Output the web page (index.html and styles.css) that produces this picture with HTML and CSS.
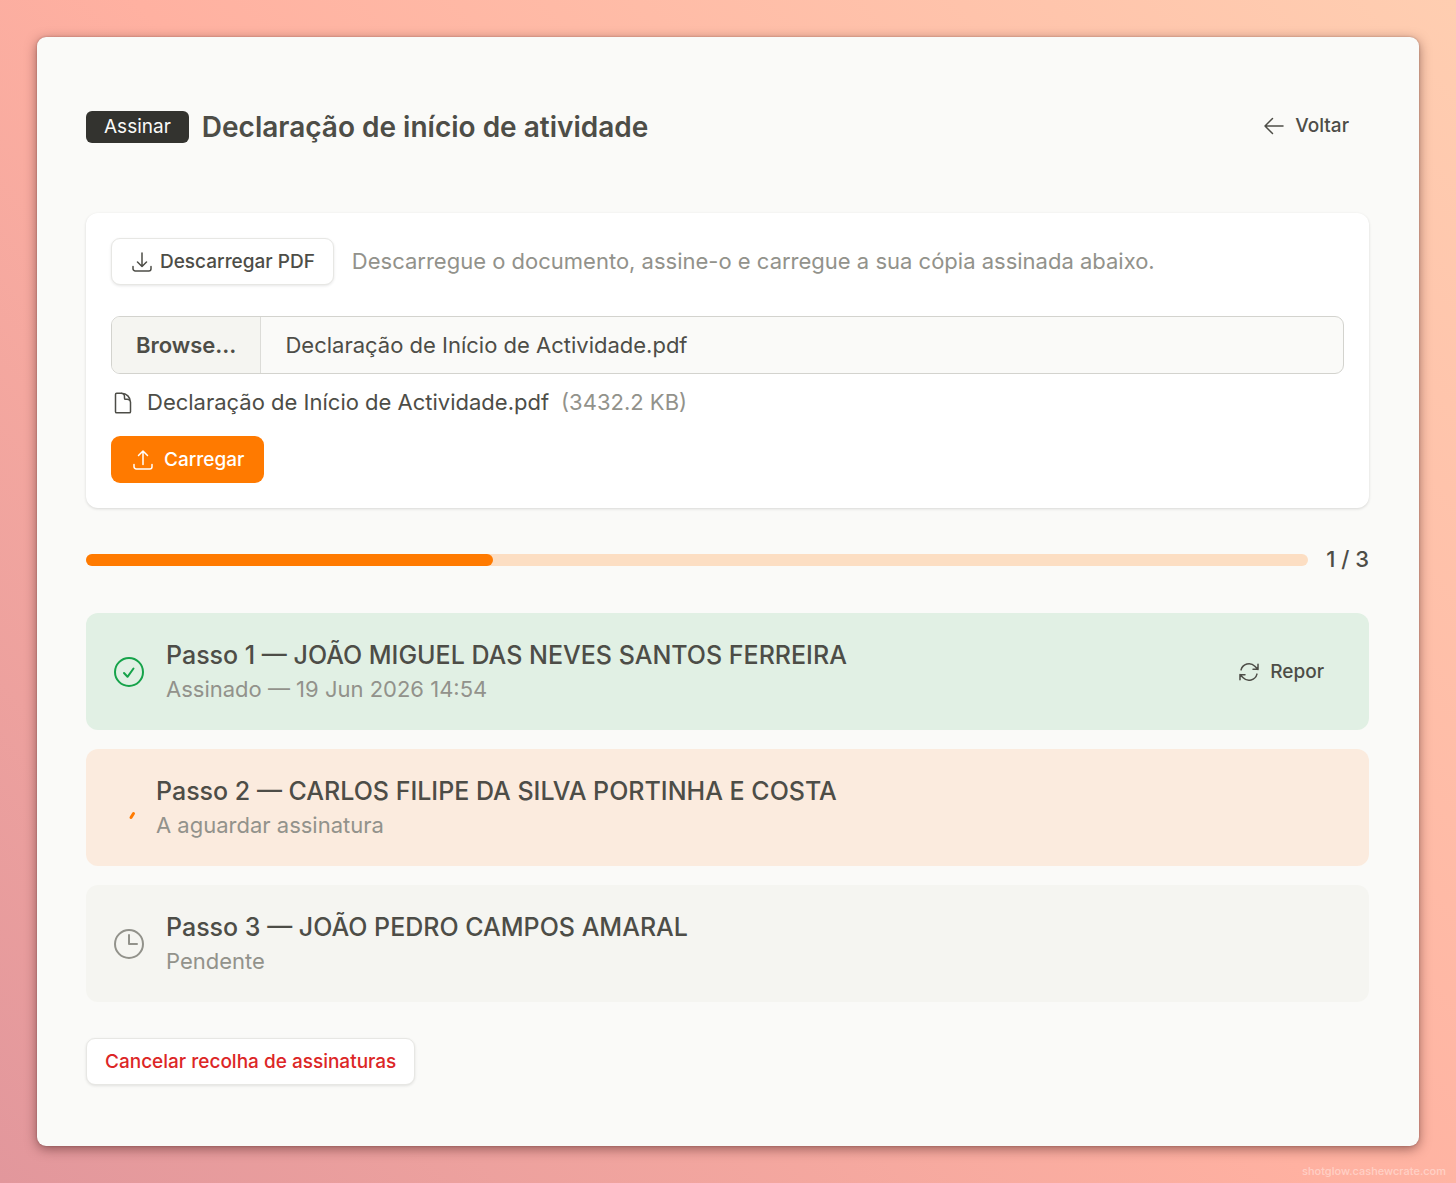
FILE: index.html
```
<!DOCTYPE html>
<html lang="pt">
<head>
    <meta charset="UTF-8">
    <meta name="viewport" content="width=device-width, initial-scale=1.0">
    <title>Declaração de início de atividade</title>
    <link rel="stylesheet" href="styles.css">
</head>
<body>
    <main class="sheet">
        <header class="page-header">
            <div class="page-title">
                <span class="badge">Assinar</span>
                <h1>Declaração de início de atividade</h1>
            </div>
            <a href="#" class="btn btn-ghost btn-back">
                <svg class="icon" viewBox="0 0 24 24"><path d="M10.5 19.5 3 12m0 0 7.5-7.5M3 12h18"/></svg>
                Voltar
            </a>
        </header>

        <section class="card">
            <div class="download-row">
                <button type="button" class="btn btn-outline btn-download">
                    <svg class="icon" viewBox="0 0 24 24"><path d="M3 16.5v2.25A2.25 2.25 0 0 0 5.25 21h13.5A2.25 2.25 0 0 0 21 18.75V16.5M16.5 12 12 16.5m0 0L7.5 12m4.5 4.5V3"/></svg>
                    Descarregar PDF
                </button>
                <p class="muted">Descarregue o documento, assine-o e carregue a sua cópia assinada abaixo.</p>
            </div>

            <label class="file-input">
                <input type="file" accept="application/pdf">
                <span class="file-browse">Browse…</span>
                <span class="file-name">Declaração de Início de Actividade.pdf</span>
            </label>

            <div class="file-info">
                <svg class="icon" viewBox="0 0 24 24"><path d="M19.5 14.25v-2.625a3.375 3.375 0 0 0-3.375-3.375h-1.5A1.125 1.125 0 0 1 13.5 7.125v-1.5a3.375 3.375 0 0 0-3.375-3.375H5.625c-.621 0-1.125.504-1.125 1.125v17.25c0 .621.504 1.125 1.125 1.125h12.75c.621 0 1.125-.504 1.125-1.125V11.25a9 9 0 0 0-9-9"/></svg>
                <span>Declaração de Início de Actividade.pdf</span>
                <span class="muted">(3432.2 KB)</span>
            </div>

            <button type="button" class="btn btn-primary">
                <svg class="icon" viewBox="0 0 24 24"><path d="M3 16.5v2.25A2.25 2.25 0 0 0 5.25 21h13.5A2.25 2.25 0 0 0 21 18.75V16.5M7.5 7.5 12 3m0 0 4.5 4.5M12 3v13.5"/></svg>
                Carregar
            </button>
        </section>

        <div class="progress">
            <div class="progress-track">
                <div class="progress-bar" style="width: 33.33%"></div>
            </div>
            <span class="progress-label">1 / 3</span>
        </div>

        <ol class="steps">
            <li class="step step-done">
                <svg class="step-icon" viewBox="0 0 36 36"><circle cx="18" cy="18" r="14"/><path d="m13 19 3.500 3.800 6-8.300"/></svg>
                <div class="step-text">
                    <h2>Passo 1 — JOÃO MIGUEL DAS NEVES SANTOS FERREIRA</h2>
                    <p class="muted">Assinado — 19 Jun 2026 14:54</p>
                </div>
                <button type="button" class="btn btn-ghost">
                    <svg class="icon" viewBox="0 0 24 24"><path d="M16.023 9.348h4.992V4.356M2.985 19.644v-4.992h4.992M2.985 14.652l3.181 3.183a8.250 8.250 0 0 0 13.803-3.700M4.031 9.865a8.250 8.250 0 0 1 13.803-3.700l3.181 3.183"/></svg>
                    Repor
                </button>
            </li>
            <li class="step step-active">
                <svg class="step-spinner" viewBox="0 0 26 26"><path d="m20 22.500 2.500-4"/></svg>
                <div class="step-text">
                    <h2>Passo 2 — CARLOS FILIPE DA SILVA PORTINHA E COSTA</h2>
                    <p class="muted">A aguardar assinatura</p>
                </div>
            </li>
            <li class="step step-pending">
                <svg class="step-icon" viewBox="0 0 36 36"><circle cx="18" cy="18" r="14"/><path d="M18 9v9h8"/></svg>
                <div class="step-text">
                    <h2>Passo 3 — JOÃO PEDRO CAMPOS AMARAL</h2>
                    <p class="muted">Pendente</p>
                </div>
            </li>
        </ol>

        <button type="button" class="btn btn-outline btn-danger">Cancelar recolha de assinaturas</button>
    </main>
    <footer class="watermark">shotglow.cashewcrate.com</footer>
</body>
</html>
```
FILE: styles.css
```
* {
    box-sizing: border-box;
}
body {
    position: relative;
    margin: 0;
    padding: 37px;
    min-height: 100vh;
    font-family: Inter, "Liberation Sans", sans-serif;
    font-size: 22px;
    line-height: 33px;
    color: #4d4d47;
    background: linear-gradient(45deg, #e2979c 0%, #ffb1a1 50%, #ffceb1 100%);
}
h1, h2, p {
    margin: 0;
}
.muted {
    color: #92928b;
}
.sheet {
    min-height: calc(100vh - 74px);
    padding: 66px 50px 61px 49px;
    background-color: #fafaf8;
    border-radius: 9px;
    box-shadow: 0 3px 12px rgba(60, 20, 20, 0.5), 0 0 2px rgba(60, 20, 20, 0.3);
}

/* Header */
.page-header {
    display: flex;
    justify-content: space-between;
    align-items: flex-start;
    margin-bottom: 62px;
}
.page-title {
    display: flex;
    align-items: center;
    gap: 13px;
    min-height: 48px;
}
.page-title h1 {
    font-size: 28px;
    line-height: 36px;
    font-weight: 600;
}
.badge {
    padding: 0 18px;
    font-size: 19px;
    line-height: 32px;
    color: #fafaf8;
    background-color: #33332f;
    border-radius: 6px;
}

/* Buttons */
.btn {
    display: inline-flex;
    align-items: center;
    gap: 9px;
    height: 47px;
    padding: 0 20px;
    font-family: inherit;
    font-size: 19px;
    line-height: 24px;
    font-weight: 500;
    color: #4d4d47;
    text-decoration: none;
    background: none;
    border: 0;
    border-radius: 9px;
    cursor: pointer;
}
.btn-back {
    height: 45px;
}
.btn-outline {
    padding: 0 18px;
    background-color: #fff;
    border: 1px solid #e7e7e4;
    box-shadow: 0 1px 3px rgba(0, 0, 0, 0.1);
}
.btn-download {
    gap: 6px;
}
.btn-primary {
    color: #fff;
    background-color: #ff7a00;
}
.btn-danger {
    color: #dc2626;
}
.icon {
    flex: none;
    width: 24px;
    height: 24px;
    fill: none;
    stroke: currentColor;
    stroke-width: 1.5;
    stroke-linecap: round;
    stroke-linejoin: round;
}

/* Upload card */
.card {
    padding: 25px;
    background-color: #fff;
    border-radius: 12px;
    box-shadow: 0 1px 3px rgba(0, 0, 0, 0.14);
}
.download-row {
    display: flex;
    align-items: center;
    gap: 18px;
    margin-bottom: 31px;
}
.file-input {
    display: flex;
    position: relative;
    height: 58px;
    line-height: 56px;
    background-color: #fafaf8;
    border: 1px solid #d3d3ce;
    border-radius: 9px;
    overflow: hidden;
    cursor: pointer;
}
.file-input input {
    position: absolute;
    inset: 0;
    opacity: 0;
}
.file-browse {
    padding: 0 24px;
    font-weight: 600;
    background-color: #f5f5f1;
    border-right: 1px solid #dcdcd8;
}
.file-name {
    padding: 0 24px;
}
.file-info {
    display: flex;
    align-items: center;
    gap: 12px;
    margin: 12px 0 17px;
}

/* Progress */
.progress {
    display: flex;
    align-items: center;
    gap: 18px;
    margin: 35px 0 37px;
}
.progress-track {
    flex: 1;
    height: 12px;
    background-color: #fcdec3;
    border-radius: 6px;
}
.progress-bar {
    height: 100%;
    background-color: #ff7a00;
    border-radius: 6px;
}
.progress-label {
    font-weight: 500;
}

/* Steps */
.steps {
    display: flex;
    flex-direction: column;
    gap: 19px;
    margin: 0 0 36px;
    padding: 0;
    list-style: none;
}
.step {
    display: flex;
    align-items: center;
    gap: 19px;
    padding: 24px 25px;
    border-radius: 12px;
}
.step-done {
    background-color: #e1f0e4;
}
.step-active {
    background-color: #fbebde;
}
.step-pending {
    background-color: #f5f5f1;
}
.step-text {
    flex: 1;
}
.step-text h2 {
    font-size: 25px;
    line-height: 36px;
    font-weight: 500;
}
.step-icon {
    width: 36px;
    height: 36px;
    fill: none;
    stroke: #92928b;
    stroke-width: 2;
    stroke-linecap: round;
    stroke-linejoin: round;
}
.step-done .step-icon {
    stroke: #16a34a;
}
.step-spinner {
    width: 26px;
    height: 26px;
    fill: none;
    stroke: #ff7a00;
    stroke-width: 3;
    stroke-linecap: round;
}

.watermark {
    position: absolute;
    right: 10px;
    bottom: 4px;
    font-size: 11px;
    line-height: 16px;
    font-weight: 500;
    color: rgba(255, 255, 255, 0.4);
}
```
